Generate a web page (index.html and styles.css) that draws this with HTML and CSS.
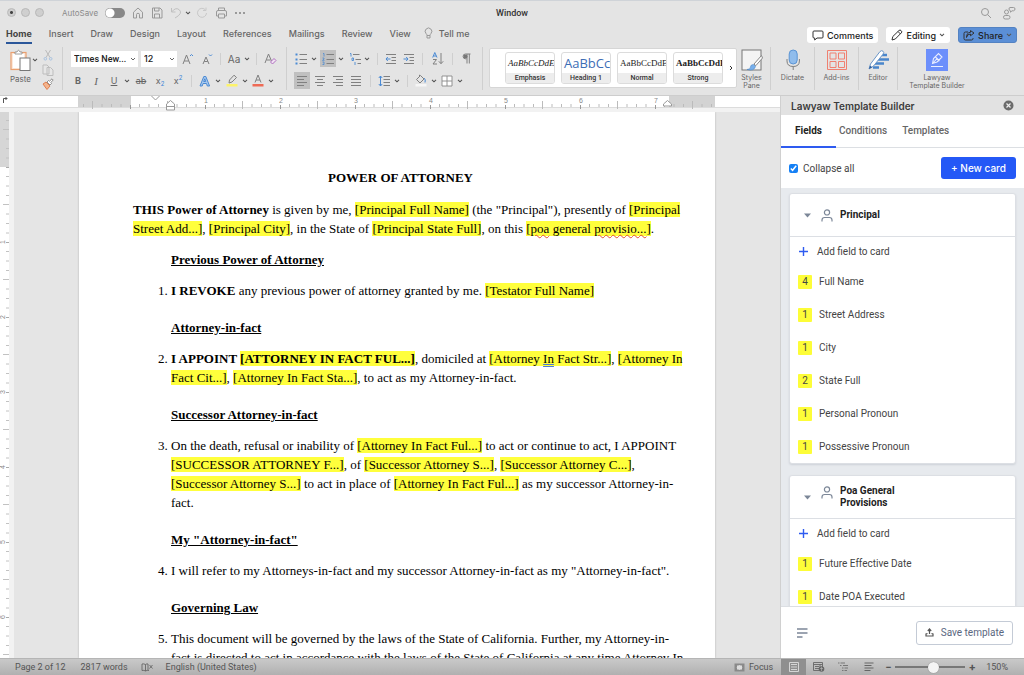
FILE: index.html
```html
<!DOCTYPE html>
<html lang="en">
<head>
<meta charset="utf-8">
<title>Window</title>
<link rel="stylesheet" href="styles.css">
</head>
<body>
<svg class="defs" aria-hidden="true">
  <symbol id="chev" viewBox="0 0 6 4"><path d="M1 .8l2 2 2-2" fill="none" stroke="#555" stroke-width="1.1"/></symbol>
  <symbol id="person" viewBox="0 0 12 13"><circle cx="6" cy="3.4" r="2.6" fill="none" stroke="#7c8798" stroke-width="1.2"/><path d="M1 12.5v-1.6q0-2.4 2.6-2.4h4.8q2.6 0 2.6 2.4v1.6" fill="none" stroke="#7c8798" stroke-width="1.2"/></symbol>
</svg>
<div class="app">
<header class="chrome">
  <div class="titlebar">
    <div class="title-left">
      <i class="light active"></i><i class="light"></i><i class="light"></i>
      <label class="autosave">AutoSave <input type="checkbox" class="switch"></label>
      <button class="ib" aria-label="Home"><svg width="12" height="12" viewBox="0 0 12 12"><path d="M1.5 5.2L6 1l4.500 4.200V11H7.500V7.500q0-1.200-1.500-1.200t-1.500 1.200V11h-3z" class="ln"/></svg></button>
      <button class="ib" aria-label="Save"><svg width="12" height="12" viewBox="0 0 12 12"><path d="M1.500 1h7.500l2 2v8h-9.500zM3.500 1v3h4.500V1M3.500 11V7h5v4" class="ln"/></svg></button>
      <button class="ib" aria-label="Undo"><svg width="12" height="12" viewBox="0 0 12 12"><path d="M1.500 1v4h4M1.500 5Q6-.5 9.500 3t-4.500 8" fill="none" stroke="#c0c0c0"/></svg></button>
      <button class="ib tiny" aria-label="Undo options"><svg width="6" height="4"><use href="#chev"/></svg></button>
      <button class="ib" aria-label="Redo"><svg width="12" height="12" viewBox="0 0 12 12"><path d="M9.500 3A4.500 4.500 0 1 0 10.500 6M10 .5V3.500H7" fill="none" stroke="#c8c8c8"/></svg></button>
      <button class="ib" aria-label="Print"><svg width="13" height="12" viewBox="0 0 13 12"><path d="M3.500 3.500V1h6v2.500M3.500 9H1.500V5q0-1.500 1.500-1.500h7q1.500 0 1.500 1.500v4h-2M3.500 7h6v4h-6z" class="ln"/></svg></button>
      <button class="ib" aria-label="More"><svg width="10" height="4" viewBox="0 0 10 4"><g fill="#777"><circle cx="1" cy="2" r=".9"/><circle cx="5" cy="2" r=".9"/><circle cx="9" cy="2" r=".9"/></g></svg></button>
    </div>
    <div class="title">Window</div>
    <div class="title-right">
      <button class="ib" aria-label="Search"><svg width="12" height="12" viewBox="0 0 12 12"><circle cx="5" cy="5" r="3.500" class="ln"/><path d="M7.600 7.600L11 11" class="ln"/></svg></button>
      <button class="ib" aria-label="People"><svg width="14" height="14" viewBox="0 0 14 14"><circle cx="4.500" cy="6" r="2" class="ln"/><rect x="1.500" y="9.500" width="6.500" height="3.500" rx="1.700" class="ln"/><path d="M8 1.500h3.500q1.500 0 1.500 1.500t-1.500 1.800H10L8.500 6.200V4.800Q7 4.500 7 3t1-1.500z" class="ln"/></svg></button>
    </div>
  </div>
  <div class="tabbar">
    <nav class="tabs">
      <a href="#" class="on">Home</a><a href="#">Insert</a><a href="#">Draw</a><a href="#">Design</a><a href="#">Layout</a><a href="#">References</a><a href="#">Mailings</a><a href="#">Review</a><a href="#">View</a>
      <a href="#" class="tell"><svg width="9" height="12" viewBox="0 0 9 12"><path d="M3 8.500Q3 7.500 2 6.500A3.300 3.300 0 1 1 7 6.500Q6 7.500 6 8.500zM3 8.500v2.500h3V8.500" class="ln"/></svg>Tell me</a>
    </nav>
    <div class="actions">
      <button class="pill"><svg width="12" height="11" viewBox="0 0 12 11"><path d="M2 1h8q1 0 1 1v5q0 1-1 1H5L2.700 10V8H2Q1 8 1 7V2q0-1 1-1z" class="dk"/></svg>Comments</button>
      <button class="pill"><svg width="12" height="12" viewBox="0 0 12 12"><path d="M1 11l.8-3.500L8 1.500q1-1 2 0l.5.500q.8.900-.2 1.900L4.300 10zM7 2.500L9.500 5" class="dk"/></svg>Editing<svg width="6" height="4"><use href="#chev"/></svg></button>
      <button class="pill share"><svg width="12" height="11" viewBox="0 0 12 11"><path d="M5 2H2.500Q1 2 1 3.500v5Q1 10 2.500 10h6Q10 10 10 8.500V8M3.500 7.500Q4 4 7.500 4V5.800L11 3 7.500.6V2.300Q3.500 2.500 3.500 7.500z" class="dk"/></svg>Share<svg width="6" height="4"><use href="#chev"/></svg></button>
    </div>
  </div>
  <div class="ribbon">
    <div class="clip">
      <button class="paste"><span><svg width="21" height="22" viewBox="0 0 21 22"><rect x="1" y="3.500" width="15" height="17" fill="#fbe9dc" stroke="#eaa070" stroke-width="1.200"/><rect x="3" y="5" width="11" height="14" fill="#fff"/><path d="M5 5V3h2q1.500-3.500 3 0h2v2z" fill="#fff" stroke="#888" stroke-width=".8"/><rect x="10" y="9" width="10" height="12.500" fill="#fff" stroke="#777"/></svg><svg width="6" height="4"><use href="#chev"/></svg></span>Paste</button>
      <div class="clipcol">
        <button class="ib" aria-label="Cut"><svg width="10" height="12" viewBox="0 0 10 12"><path d="M2.500 1L7 8.500M7.500 1L3 8.500" fill="none" stroke="#bbb"/><g fill="none" stroke="#a9c3e0"><circle cx="2.300" cy="9.800" r="1.300"/><circle cx="7.700" cy="9.800" r="1.300"/></g></svg></button>
        <button class="ib" aria-label="Copy"><svg width="12" height="12" viewBox="0 0 12 12"><path d="M1 1h4l2 2v7H1zM5 3.500h3.500L11 6v5.500H5z" fill="#e6e6e6" stroke="#bdbdbd"/></svg></button>
        <button class="ib" aria-label="Format painter"><svg width="12" height="12" viewBox="0 0 12 12"><path d="M1 6l3-2 4 4-3 3.500z" fill="#f3b48e" stroke="#e08050"/><path d="M5 4l1.500-1.500 1 .7L10 .8l1.200 1.200-2.400 2.500.7 1L8 7z" fill="#fff" stroke="#777" stroke-width=".8"/></svg></button>
      </div>
    </div>
    <div class="group">
      <div class="row f1">
        <select class="sel" aria-label="Font"><option>Times New...</option></select>
        <select class="sel size" aria-label="Font size"><option>12</option></select>
        <button class="ib" aria-label="Grow font"><svg width="12" height="12" viewBox="0 0 12 12"><path d="M1 11L4.500 2 8 11M2.300 8h4.400" class="gl"/><path d="M8 3l1.500-1.500L11 3" class="bl"/></svg></button>
        <button class="ib" aria-label="Shrink font"><svg width="12" height="12" viewBox="0 0 12 12"><path d="M2 11L5 4 8 11M3.200 8.500h3.600" class="gl"/><path d="M8 1.500L9.500 3 11 1.500" class="bl"/></svg></button>
        <i class="sep"></i><button class="ib aa">Aa</button><button class="ib" aria-label="Case options"><svg width="6" height="4"><use href="#chev"/></svg></button><i class="sep"></i>
        <button class="ib" aria-label="Clear formatting"><svg width="13" height="12" viewBox="0 0 13 12"><path d="M1 10L4.500 1 7.500 8M2.500 7h4" class="gl"/><path d="M6.500 9L10 5.500l2 2L8.500 11z" fill="#f2e2f4" stroke="#b070c0"/></svg></button>
      </div>
      <div class="row f2">
        <button class="ib b">B</button><button class="ib it">I</button><button class="ib u">U</button><button class="ib" aria-label="Underline options"><svg width="6" height="4"><use href="#chev"/></svg></button>
        <button class="ib st">ab</button><button class="ib">x<sub>2</sub></button><button class="ib">x<sup>2</sup></button><i class="sep"></i>
        <button class="ib" aria-label="Text effects"><svg width="12" height="12" viewBox="0 0 12 12"><path d="M1 11L4.800 1.500h2L10.600 11H8.300L7.500 8.500H4L3.200 11zM4.700 6.500h2L5.800 3.800z" fill="#a9c9ee" stroke="#4a8ad4"/></svg></button><button class="ib" aria-label="Effect options"><svg width="6" height="4"><use href="#chev"/></svg></button>
        <button class="ib" aria-label="Highlight"><svg width="12" height="13" viewBox="0 0 12 13"><path d="M3 9l.5-3L8 1.200 10.500 3.500 6 8z" class="gl"/><rect x=".5" y="10" width="11" height="2.500" fill="#fdf36a"/></svg></button><button class="ib" aria-label="Highlight options"><svg width="6" height="4"><use href="#chev"/></svg></button>
        <button class="ib" aria-label="Font color"><svg width="12" height="13" viewBox="0 0 12 13"><path d="M3 8.500L6 1l3 7.500M4 6h4" class="gl"/><rect x=".5" y="10" width="11" height="2.500" fill="#ee6a55"/></svg></button><button class="ib" aria-label="Color options"><svg width="6" height="4"><use href="#chev"/></svg></button>
      </div>
    </div>
    <div class="group para">
      <div class="row p1">
        <button class="ib" aria-label="Bullets"><svg width="12" height="12" viewBox="0 0 12 12"><path d="M4.500 1.500H12M4.500 6.500H12M4.500 10.500H12" class="gl"/><path d="M.5 1.500h2M.5 6.500h2M.5 10.500h2" stroke="#4a8ad4" stroke-width="2"/></svg></button><button class="ib" aria-label="Bullet options"><svg width="6" height="4"><use href="#chev"/></svg></button>
        <button class="ib pressed" aria-label="Numbering"><svg width="12" height="12" viewBox="0 0 12 12"><path d="M4.500 1.500H12M4.500 6.500H12M4.500 10.500H12" class="gl"/><path d="M1 .5h1V3.500M.5 5h1.500v1L.5 7.300h2M.5 9h1.500v2.500H.5" fill="none" stroke="#4a8ad4" stroke-width=".8"/></svg></button><button class="ib" aria-label="Numbering options"><svg width="6" height="4"><use href="#chev"/></svg></button>
        <button class="ib" aria-label="Multilevel list"><svg width="12" height="12" viewBox="0 0 12 12"><path d="M4 1.500h6.500M6.500 6.500H12M8.500 10.500H12" class="gl"/><path d="M1 .5h1V3.500M3 5h1.500v2.500H3zM6 9v3" fill="none" stroke="#4a8ad4" stroke-width=".9"/></svg></button><button class="ib" aria-label="Multilevel options"><svg width="6" height="4"><use href="#chev"/></svg></button><i class="sep"></i>
        <button class="ib" aria-label="Decrease indent"><svg width="12" height="12" viewBox="0 0 12 12"><path d="M1 1.500h10M6.500 4.500H11M6.500 7.500H11M1 10.500h10" class="gl"/><path d="M5.500 6H1M2.800 4L1 6l1.800 2" class="bl"/></svg></button>
        <button class="ib" aria-label="Increase indent"><svg width="12" height="12" viewBox="0 0 12 12"><path d="M1 1.500h10M6.500 4.500H11M6.500 7.500H11M1 10.500h10" class="gl"/><path d="M.5 6H5M3.200 4L5 6 3.200 8" class="bl"/></svg></button><i class="sep"></i>
        <button class="ib" aria-label="Sort"><svg width="12" height="13" viewBox="0 0 12 13"><path d="M.7 5.500L2.800 .5 5 5.500M1.500 4h2.700" class="bl"/><path d="M1 7.500h3.500L1 12h4M9 1v10.500M6.800 9.300L9 11.700l2.200-2.400" class="gl"/></svg></button><i class="sep"></i>
        <button class="ib" aria-label="Show marks"><svg width="9" height="11" viewBox="0 0 9 11"><path d="M8.500 1H3.500a2.300 2.300 0 0 0 0 4.800H4.500M5 1v9.500M7.300 1v9.500" class="gl"/><circle cx="3.500" cy="3.400" r="2" fill="#777"/></svg></button>
      </div>
      <div class="row p2">
        <button class="ib pressed" aria-label="Align left"><svg width="12" height="10" viewBox="0 0 12 10"><path d="M1 .5h10M1 3.500h7M1 6.500h10M1 9.500h7" class="gl"/></svg></button>
        <button class="ib" aria-label="Center"><svg width="12" height="10" viewBox="0 0 12 10"><path d="M1 .5h10M3 3.500h6M1 6.500h10M3 9.500h6" class="gl"/></svg></button>
        <button class="ib" aria-label="Align right"><svg width="12" height="10" viewBox="0 0 12 10"><path d="M1 .5h10M4 3.500h7M1 6.500h10M4 9.500h7" class="gl"/></svg></button>
        <button class="ib" aria-label="Justify"><svg width="12" height="10" viewBox="0 0 12 10"><path d="M1 .5h10M1 3.500h10M1 6.500h10M1 9.500h10" class="gl"/></svg></button><i class="sep"></i>
        <button class="ib" aria-label="Line spacing"><svg width="12" height="12" viewBox="0 0 12 12"><path d="M5.500 1.500H12M5.500 4.500H12M5.500 7.500H12M5.500 10.500H12" class="gl"/><path d="M2.500 1v10M.8 3l1.700-2 1.700 2M.8 9l1.700 2 1.700-2" class="bl"/></svg></button><button class="ib" aria-label="Spacing options"><svg width="6" height="4"><use href="#chev"/></svg></button><i class="sep"></i>
        <button class="ib" aria-label="Shading"><svg width="12" height="13" viewBox="0 0 12 13"><path d="M1.500 5.500L5.500 1.500 9 5 5 9zM4.500 3V.8" class="gl"/><path d="M9 4q2 1.500 1 4.500" class="bl"/><rect x=".5" y="10" width="11" height="2.500" fill="#f6f6f6"/></svg></button><button class="ib" aria-label="Shading options"><svg width="6" height="4"><use href="#chev"/></svg></button>
        <button class="ib" aria-label="Borders"><svg width="12" height="12" viewBox="0 0 12 12"><path d="M1 1h10v10H1zM6 1v10M1 6h10" fill="#fff" stroke="#888" stroke-width=".9"/></svg></button><button class="ib" aria-label="Border options"><svg width="6" height="4"><use href="#chev"/></svg></button>
      </div>
    </div>
    <div class="gallery">
      <button class="style"><span class="prev em">AaBbCcDdEe</span><span class="nm">Emphasis</span></button>
      <button class="style"><span class="prev h1">AaBbCcDd</span><span class="nm">Heading 1</span></button>
      <button class="style"><span class="prev">AaBbCcDdEe</span><span class="nm">Normal</span></button>
      <button class="style"><span class="prev strong">AaBbCcDdEe</span><span class="nm">Strong</span></button>
      <button class="ib more" aria-label="More styles"><svg width="4" height="6" viewBox="0 0 4 6"><path d="M1 1l2 2-2 2" fill="none" stroke="#333"/></svg></button>
    </div>
    <div class="bigs">
      <button class="big"><svg width="22" height="22" viewBox="0 0 22 22"><rect x="1" y="1" width="19" height="20" fill="#f4f4f4" stroke="#777"/><path d="M20.500 6.500L13 15l1.800 1.700L21.500 9z" fill="#fff" stroke="#888"/><path d="M12.500 15.500q-3 0-3 2.500T6 20.500q7 2 8.500-3z" fill="#78b0ec" stroke="#4a84c4" stroke-width=".6"/></svg>Styles<br>Pane</button>
      <button class="big"><svg width="22" height="22" viewBox="0 0 22 22"><rect x="7.200" y="1" width="8" height="14" rx="4" fill="#8fbcec" stroke="#5a94d4"/><path d="M5 10v2q0 5.500 6.200 5.500T17.400 12v-2M11.200 17.500V21" class="gl"/></svg>Dictate</button>
      <button class="big"><svg width="22" height="22" viewBox="0 0 22 22"><path d="M1.500 1.500h19v19h-19zM4 4h6v6H4zM12.500 4h6v6h-6zM4 12.500h6v6H4zM12.500 12.500h6v6h-6z" fill="none" stroke="#f08070"/></svg>Add-ins</button>
      <button class="big"><svg width="22" height="22" viewBox="0 0 22 22"><path d="M12 6h8M10 10.500h12M8 14.500h9M6 18.500h6" stroke="#4a86cc" stroke-width="2.500"/><path d="M2 20l1.500-5L13 2.500q1.500-1.500 3-.3t0 3L6.500 17z" fill="#fff" stroke="#6a96c8"/><path d="M2 20l1-3.500 2.300 1.700z" fill="#335f9c"/></svg>Editor</button>
      <button class="big wide"><svg width="22" height="22" viewBox="0 0 22 22"><rect width="22" height="22" fill="#6c8ffb"/><path d="M6.500 14.500l1-5L12.500 4.500 16 8l-5 5zM7 14l4.500-5M9.500 8l4 4M5 17.500h12" fill="none" stroke="#e8edff" stroke-width="1.100"/></svg>Lawyaw<br>Template Builder</button>
    </div>
  </div>
</header>
<div class="work">
<main class="editor">
  <div class="hruler">
    <svg class="corner" width="8" height="8" viewBox="0 0 8 8"><path d="M2.500 7V2.500H6M4.500 1L6 2.500 4.500 4" fill="none" stroke="#555"/></svg>
    <div class="scale"><svg width="637" height="16" role="img" aria-label="Horizontal ruler">
      <defs><pattern id="ht" x="52" width="75" height="16" patternUnits="userSpaceOnUse"><path d="M9.500 8v3M19 8v3M28.500 8v3M37.500 5v8M47 8v3M56.500 8v3M66 8v3" stroke="#bbb"/><path d="M.5 9v4" stroke="#999"/></pattern></defs>
      <rect width="637" height="11" fill="#fff"/><rect width="53" height="11" fill="#d3d3d3"/><rect x="591" width="46" height="11" fill="#d3d3d3"/><rect width="637" height="13" fill="url(#ht)"/>
      <g class="nums"><text x="128" y="7">1</text><text x="203" y="7">2</text><text x="278" y="7">3</text><text x="353" y="7">4</text><text x="428" y="7">5</text><text x="503" y="7">6</text><text x="578" y="7">7</text></g>
      <g fill="#fff" stroke="#999"><path d="M73.500 0l4 4 4-4"/><path d="M88.500 14v-6l4-3.500 4 3.500v6zM88.500 10.500h8"/><path d="M585.500 10V8l4-3.500 4 3.500v2z"/></g>
    </svg></div>
  </div>
  <div class="canvas">
    <svg class="vruler" width="10" height="547" role="img" aria-label="Vertical ruler">
      <defs><pattern id="vt" y="55" width="10" height="75" patternUnits="userSpaceOnUse"><path d="M6 9.500h3M6 19h3M6 28.500h3M3 37.500h6M6 47h3M6 56.500h3M6 66h3" stroke="#c2c2c2"/><path d="M6 .5h3" stroke="#aaa"/></pattern></defs>
      <rect width="9" height="547" fill="#fff"/><rect width="9" height="55" fill="#d6d6d6"/><rect width="10" height="547" fill="url(#vt)"/>
      <g class="nums"><text transform="translate(5 130) rotate(-90)">1</text><text transform="translate(5 205) rotate(-90)">2</text><text transform="translate(5 280) rotate(-90)">3</text><text transform="translate(5 355) rotate(-90)">4</text><text transform="translate(5 430) rotate(-90)">5</text><text transform="translate(5 505) rotate(-90)">6</text></g>
    </svg>
    <div class="desk">
    <article class="page">
      <h1>POWER OF ATTORNEY</h1>
      <p><b>THIS Power of Attorney</b> is given by me, <mark>[Principal Full Name]</mark> (the "Principal"), presently of <mark>[Principal<br>Street Add...]</mark>, <mark>[Principal City]</mark>, in the State of <mark>[Principal State Full]</mark>, on this <mark>[<span class="err">poa</span> general <span class="err">provisio...</span>]</mark>.</p>
      <h2>Previous Power of Attorney</h2>
      <ol><li><b>I REVOKE</b> any previous power of attorney granted by me. <mark>[Testator Full Name]</mark></li></ol>
      <h2>Attorney-in-fact</h2>
      <ol start="2"><li><b>I APPOINT <mark>[ATTORNEY IN FACT FUL...]</mark></b>, domiciled at <mark>[Attorney <span class="gram">In</span> Fact Str...]</mark>, <mark>[Attorney In<br>Fact Cit...]</mark>, <mark>[Attorney In Fact Sta...]</mark>, to act as my Attorney-in-fact.</li></ol>
      <h2>Successor Attorney-in-fact</h2>
      <ol start="3"><li>On the death, refusal or inability of <mark>[Attorney In Fact Ful...]</mark> to act or continue to act, I APPOINT<br><mark>[SUCCESSOR ATTORNEY F...]</mark>, of <mark>[Successor Attorney S...]</mark>, <mark>[Successor Attorney C...]</mark>,<br><mark>[Successor Attorney S...]</mark> to act in place of <mark>[Attorney In Fact Ful...]</mark> as my successor Attorney-in-<br>fact.</li></ol>
      <h2>My "Attorney-in-fact"</h2>
      <ol start="4"><li>I will refer to my Attorneys-in-fact and my successor Attorney-in-fact as my "Attorney-in-fact".</li></ol>
      <h2>Governing Law</h2>
      <ol start="5"><li>This document will be governed by the laws of the State of California. Further, my Attorney-in-<br>fact is directed to act in accordance with the laws of the State of California at any time Attorney In</li></ol>
    </article>
    </div>
  </div>
</main>
<aside class="pane">
  <div class="pane-title">Lawyaw Template Builder<button class="ib" aria-label="Close"><svg width="11" height="11" viewBox="0 0 11 11"><circle cx="5.500" cy="5.500" r="5" fill="#6c6c6c"/><path d="M3.500 3.500l4 4M7.500 3.500l-4 4" stroke="#eee" stroke-width="1.200"/></svg></button></div>
  <nav class="pane-tabs"><a href="#" class="on">Fields</a><a href="#">Conditions</a><a href="#">Templates</a></nav>
  <div class="tools"><label><input type="checkbox" checked>Collapse all</label><button class="new">+ New card</button></div>
  <div class="cards">
    <section class="card">
      <h3><svg class="tri" width="7" height="5"><path d="M0 .5h7L3.500 4.500z" fill="#7c8798"/></svg><svg width="12" height="13"><use href="#person"/></svg><span>Principal</span></h3>
      <button class="add"><svg width="9" height="9"><path d="M4.500 0v9M0 4.500h9" stroke="#2e5bf0" stroke-width="1.400"/></svg>Add field to card</button>
      <ul><li><i>4</i>Full Name</li><li><i>1</i>Street Address</li><li><i>1</i>City</li><li><i>2</i>State Full</li><li><i>1</i>Personal Pronoun</li><li><i>1</i>Possessive Pronoun</li></ul>
    </section>
    <section class="card">
      <h3><svg class="tri" width="7" height="5"><path d="M0 .5h7L3.500 4.500z" fill="#7c8798"/></svg><svg class="up" width="12" height="13"><use href="#person"/></svg><span>Poa General<br>Provisions</span></h3>
      <button class="add"><svg width="9" height="9"><path d="M4.500 0v9M0 4.500h9" stroke="#2e5bf0" stroke-width="1.400"/></svg>Add field to card</button>
      <ul><li><i>1</i>Future Effective Date</li><li><i>1</i>Date POA Executed</li></ul>
    </section>
  </div>
  <footer class="pane-foot">
    <button class="ib" aria-label="Menu"><svg width="12" height="10" viewBox="0 0 12 10"><path d="M0 1h10.500M0 5h10.500M0 9h5.500" stroke="#7c8798" stroke-width="1.400"/></svg></button>
    <button class="save"><svg width="9" height="9" viewBox="0 0 9 9"><path d="M4.500 6V1.200M2.800 3L4.500 1l1.700 2M2.500 5.500L1 6v2h7V6L6.500 5.500" fill="none" stroke="#555" stroke-width="1.200"/></svg>Save template</button>
  </footer>
</aside>
</div>
<footer class="status">
  <span class="s1">Page 2 of 12</span><span class="s2">2817 words</span>
  <svg width="12" height="9" viewBox="0 0 12 9"><path d="M4.500 1.500Q2.500.5 1 1v6.500q2-.5 3.500.5Q6 7 8 7.500M4.500 1.500v6.500M4.500 1.500Q6 .5 7 1v6M8.500 2l3 3.500M11.500 2l-3 3.500" fill="none" stroke="#666" stroke-width=".9"/></svg>
  <span class="s3">English (United States)</span>
  <div class="views">
    <button class="ib focus"><svg width="11" height="9" viewBox="0 0 11 9"><path d="M.5.5h10v8H.5z" fill="#8a8a8a"/><path d="M2.500 4.500L5.500 2l3 2.500-3 2.500z" fill="#ddd"/><rect x="3" y="2.500" width="5" height="4" fill="#ddd"/></svg>Focus</button>
    <button class="ib vw sel-view" aria-label="Print layout"><svg width="10" height="10" viewBox="0 0 10 10"><path d="M.5.500h9v9h-9zM2 2.500h6M2 5h6M2 7.500h6" fill="none" stroke="#ddd" stroke-width=".9"/></svg></button>
    <button class="ib vw" aria-label="Web layout"><svg width="12" height="10" viewBox="0 0 12 10"><path d="M.5.500h9v8h-9zM.5 2.500h9M2 4.500h4M2 6.500h4M7 2v3" fill="none" stroke="#666" stroke-width=".9"/><circle cx="8.500" cy="7" r="2.800" fill="#666"/><path d="M7 6.500h3M8.500 5v4" stroke="#bbb" stroke-width=".6"/></svg></button>
    <button class="ib vw" aria-label="Outline"><svg width="11" height="10" viewBox="0 0 11 10"><path d="M0 1h1.500M2.500 1H7M2 3.500h1.500M5 3.500h5M4 6h1.500M6.500 6h3.500M4 8.500h1.500M6.500 8.500H9" stroke="#777"/></svg></button>
    <button class="ib vw" aria-label="Draft"><svg width="10" height="10" viewBox="0 0 10 10"><path d="M.5 1h9M.5 3.500h7M.5 6h9M.5 8.500h6" stroke="#666"/></svg></button>
    <button class="ib zm" aria-label="Zoom out">−</button><input type="range" aria-label="Zoom" min="0" max="100" value="56"><button class="ib zm" aria-label="Zoom in">+</button>
    <span class="pct">150%</span>
  </div>
</footer>
</div>
</body>
</html>
```
FILE: styles.css
```css
* { box-sizing: border-box; }
body { margin: 0; font-family: Inter, "Liberation Sans", sans-serif; font-size: 9px; color: #333; }
.defs { position: absolute; width: 0; height: 0; }
button, select, input { font: inherit; color: inherit; margin: 0; }
a { color: inherit; text-decoration: none; }
svg { flex: none; display: block; }
.ln { fill: none; stroke: #999; }
.gl { fill: none; stroke: #808080; }
.bl { fill: none; stroke: #4a8ad4; }
.dk { fill: none; stroke: #333; }
.app { height: 100vh; display: flex; flex-direction: column; overflow: hidden; }
.ib { border: 0; background: none; padding: 0; display: flex; align-items: center; justify-content: center; }

.chrome { background: #e4e4e4; border-top: 1px solid #cfd3d8; border-bottom: 1px solid #cdcdcd; flex: none; height: 96px; }
.titlebar { height: 23px; display: grid; grid-template-columns: 1fr auto 1fr; align-items: center; }
.title-left { display: flex; align-items: center; padding-left: 7px; gap: 7px; }
.light { width: 9px; height: 9px; border-radius: 50%; background: #cfcfcf; border: 1px solid #b8b8b8; margin-right: -2px; }
.light.active { background: radial-gradient(#444 0 1px, #cfcfcf 2px); }
.autosave { display: flex; align-items: center; gap: 7px; margin-left: 13px; color: #8a8a8a; font-size: 8px; }
.switch { appearance: none; width: 20px; height: 10px; border-radius: 5px; background: radial-gradient(circle at 5px 5px, #fff 4px, #888 5px); }
.title-left .tiny { margin: 0 -2px 0 -4px; }
.title { font: 500 9px Roboto, sans-serif; }
.title-right { display: flex; justify-content: flex-end; gap: 10px; padding-right: 8px; }
.tabbar { height: 22px; display: flex; justify-content: space-between; align-items: center; padding: 0 7px 0 6px; }
.tabs { display: flex; gap: 17px; font-weight: 500; color: #666; align-self: stretch; }
.tabs a { display: flex; align-items: center; height: 20px; border-bottom: 2px solid transparent; }
.tabs .on { color: #444; font-weight: 700; border-color: #2b579a; }
.tabs .tell { gap: 6px; margin-left: -4px; }
.actions { display: flex; gap: 8px; }
.pill { height: 16px; border: 0; border-radius: 3px; background: #fff; display: flex; align-items: center; gap: 3px; padding: 0 5px; font-weight: 500; color: #222; }
.share { background: #5b8fd6; border: 1px solid #5382c2; padding: 0 4px; }

.ribbon { display: flex; height: 49px; color: #666; padding-top: 1px; }
.clip { display: flex; width: 63px; height: 43px; border-right: 1px solid #cfcfcf; padding-left: 10px; gap: 4px; }
.paste { border: 0; background: none; padding: 2px 0 0; display: flex; flex-direction: column; gap: 3px; font-size: 8px; align-items: flex-start; }
.paste span { display: flex; align-items: center; gap: 1px; }
.clipcol { display: flex; flex-direction: column; justify-content: space-between; padding: 2px 0 0; }
.group { height: 43px; border-right: 1px solid #cfcfcf; padding: 3px 7px 0 8px; display: flex; flex-direction: column; gap: 5px; }
.para { padding: 3px 3px 0 7px; }
.row { display: grid; height: 17px; align-items: center; }
.row .ib { height: 17px; }
.f1 { grid-template-columns: 70px 36px 21px 17px 10px 18px 8px 10px 18px; }
.f2 { grid-template-columns: 14px 22px 14px 12px 16px 22px 14px 12px 16px 10px 18px 8px 18px 8px; }
.p1 { grid-template-columns: 14px 12px 16px 10px 18px 6px 14px 14px 22px 4px 27px 2px 26px; }
.p2 { grid-template-columns: 16px 20px 16px 20px 8px 20px 6px 14px 14px 12px 14px 12px; }
.sep { width: 1px; height: 12px; background: #cfcfcf; justify-self: center; }
.sel { appearance: none; border: 0; width: 67px; height: 16px; padding: 0 3px; color: #222; font-weight: 500; background: url("data:image/svg+xml,%3Csvg xmlns='http://www.w3.org/2000/svg' width='6' height='4'%3E%3Cpath d='M1 1l2 2 2-2' fill='none' stroke='%23666'/%3E%3C/svg%3E") no-repeat right 2px center #fff; }
.size { width: 36px; }
.sel:not(.size) { font-family: Roboto, sans-serif; }
.pressed { background: #c0c0c0; }
.aa { font-size: 10px; }
.b { font-weight: 700; }
.it { font-style: italic; font-family: "Liberation Serif", serif; font-size: 11px; }
.u { text-decoration: underline; }
.st { text-decoration: line-through; }
sub, sup { font-size: 6px; color: #3f84d8; line-height: 1; }
sub { padding-top: 6px; }
sup { padding-bottom: 6px; }
.gallery { flex: 0 1 248px; height: 40px; background: #fff; border: 1px solid #d6d6d6; border-radius: 2px; margin: 1px 0 0 6px; display: flex; align-items: center; padding-left: 15px; gap: 6px; }
.style { width: 50px; height: 32px; flex: none; border: 1px solid #dcdcdc; border-radius: 3px; background: #fff; padding: 0; overflow: hidden; display: flex; flex-direction: column; }
.prev { flex: 1; width: 100%; overflow: hidden; white-space: nowrap; text-align: left; padding: 0 2px; font: 9px/21px "Liberation Serif", serif; color: #222; }
.prev.em { font-style: italic; }
.prev.h1 { font: 13px/21px "Open Sans", sans-serif; color: #3d6db5; }
.prev.strong { font-weight: 700; }
.nm { background: #ededed; width: 100%; font: 500 7px/10px Roboto, sans-serif; color: #333; }
.bigs { display: flex; height: 43px; }
.big { border: 0; border-right: 1px solid #cfcfcf; background: none; padding: 2px 0 0; width: 44px; display: flex; flex-direction: column; align-items: center; gap: 3px; font-size: 7px; line-height: 8px; color: #666; }
.big:first-child { width: 34px; padding-right: 4px; }
.big:nth-child(4) { width: 39px; }
.big.wide { width: 78px; border: 0; }

.work { flex: 1; min-height: 0; display: grid; grid-template-columns: 1fr 244px; }
.editor { display: flex; flex-direction: column; min-height: 0; min-width: 0; }
.hruler { height: 16px; background: linear-gradient(#fff 11px, #dcdcdc 11px 12px, #f2f2f2 12px); flex: none; display: flex; }
.corner { flex: none; width: 10px; }
.scale { flex: 1; display: flex; justify-content: center; padding-left: 3px; }
.nums { font: 7px "Liberation Sans", sans-serif; fill: #888; text-anchor: middle; }
.canvas { flex: 1; min-height: 0; display: flex; overflow: hidden; background: #f2f2f2; }
.desk { flex: 1; display: flex; justify-content: center; background: #e5e5e5; border-left: 4px solid #f2f2f2; overflow: hidden; }
.page { width: 636px; flex: none; background: #fff; padding: 56px 47px 0 54px; box-shadow: 0 0 2px #b0b0b0; font: 13px/19px "Liberation Serif", serif; color: #000; white-space: nowrap; }
.page h1 { font-size: inherit; text-align: center; margin: 0 0 13px; }
.page p { margin: 0 0 12px; }
.page h2 { font-size: inherit; text-decoration: underline; margin: 0 0 12px 38px; }
.page ol { margin: 0 0 18px; padding-left: 38px; }
mark { background: #ffff3c; color: inherit; }
.err { text-decoration: underline wavy #e05030 1px; }
.gram { text-decoration: underline double #4a7ad8; }

.pane { background: #fff; border-left: 1px solid #d0d0d0; display: flex; flex-direction: column; min-height: 0; font: 10px Roboto, sans-serif; color: #444; }
.pane-title { height: 19px; background: #e2e2e2; padding: 0 10px; display: flex; justify-content: space-between; align-items: center; font-family: Inter, sans-serif; font-weight: 600; color: #3c3c3c; flex: none; }
.pane-tabs { height: 33px; display: flex; border-bottom: 1px solid #dcdfe3; flex: none; font-weight: 500; color: #666; }
.pane-tabs a { display: flex; align-items: center; margin-right: 15px; border-bottom: 2px solid transparent; height: 33px; }
.pane-tabs .on { padding: 0 14px; border-color: #2e5bf0; color: #222; font-weight: 700; margin-right: 3px; }
.tools { height: 40px; display: flex; align-items: center; justify-content: space-between; padding: 0 8px; flex: none; }
.tools label { display: flex; align-items: center; gap: 5px; }
.tools input { width: 9px; height: 9px; accent-color: #1580f5; }
.new { width: 75px; height: 22px; border: 0; border-radius: 3px; background: #2458f6; color: #fff; font-family: Inter, sans-serif; font-weight: 500; padding: 0; }
.cards { flex: 1; min-height: 0; overflow: hidden; background: #e7eaee; padding: 5px 8px 0; display: flex; flex-direction: column; gap: 11px; }
.card { flex: none; background: #fff; border: 1px solid #dcdfe4; border-radius: 3px; box-shadow: 0 1px 2px #cdd1d8; }
.card h3 { margin: 0; min-height: 43px; border-bottom: 1px solid #dcdfe4; display: flex; align-items: center; padding: 0 14px; gap: 10px; font-size: 10px; line-height: 12px; font-weight: 700; color: #222; }
.card h3 span { margin-left: -3px; }
.up { margin-bottom: 10px; }
.add { border: 0; background: none; padding: 0 0 0 9px; height: 28px; display: flex; align-items: center; gap: 9px; }
.card ul { list-style: none; margin: 0; padding: 0; }
.card li { height: 33px; display: flex; align-items: center; gap: 7px; padding-left: 8px; }
.card i { width: 14px; height: 14px; border-radius: 1px; background: #fdfd38; font-style: normal; line-height: 14px; text-align: center; }
.pane-foot { height: 52px; border-top: 1px solid #dcdfe3; display: flex; align-items: center; justify-content: space-between; padding: 0 11px 0 16px; flex: none; }
.save { height: 24px; border: 1px solid #c4cbd6; border-radius: 3px; background: #fff; color: #5a6780; display: flex; align-items: center; gap: 7px; padding: 0 8px; }

.status { flex: none; height: 17px; background: linear-gradient(#c9c9c9, #b0b0b0); border-top: 1px solid #b5b5b5; display: flex; align-items: center; padding-left: 15px; color: #555; font-family: Roboto, sans-serif; }
.s1 { margin-right: 15px; }
.s2 { margin-right: 13px; }
.s3 { margin-left: 13px; }
.views { margin-left: auto; display: flex; align-items: center; padding-right: 16px; }
.focus { gap: 4px; margin-right: 8px; }
.vw { width: 25px; height: 17px; }
.sel-view { background: #8f8f8f; }
.zm { width: 14px; font-weight: 700; font-size: 11px; }
.status input { appearance: none; width: 70px; height: 10px; background: linear-gradient(#777, #777) center / 100% 2px no-repeat; }
.status input::-webkit-slider-thumb { appearance: none; width: 11px; height: 11px; border-radius: 50%; background: #f4f4f4; box-shadow: 0 0 1px #666; }
.pct { margin-left: 7px; }
```
